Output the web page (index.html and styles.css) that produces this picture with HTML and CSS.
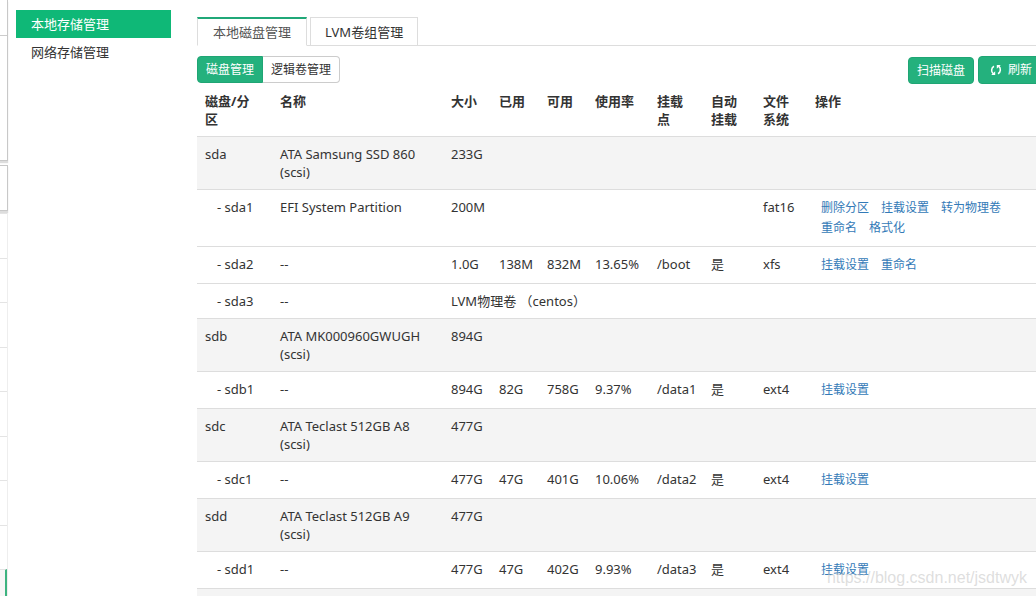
FILE: index.html
```html
<!DOCTYPE html>
<html lang="zh-CN">
<head>
<meta charset="utf-8">
<title>本地存储管理</title>
<link rel="stylesheet" href="styles.css">
</head>
<body>
<div class="page">
  <div class="rail">
    <div class="panel panel-top"><div class="panel-head"></div></div>
    <div class="panel panel-small"></div>
    <ul class="rail-list">
      <li></li><li></li><li></li><li></li><li></li><li></li><li></li><li></li><li class="current"></li>
    </ul>
  </div>
  <nav class="side">
    <a class="side-link active" href="#local">本地存储管理</a>
    <a class="side-link" href="#network">网络存储管理</a>
  </nav>
  <main class="main">
    <div class="tabs">
      <button class="tab active" type="button">本地磁盘管理</button>
      <button class="tab" type="button">LVM卷组管理</button>
    </div>
    <div class="toolbar">
      <div class="group">
        <button class="btn primary" type="button">磁盘管理</button>
        <button class="btn" type="button">逻辑卷管理</button>
      </div>
      <div class="tools">
        <button class="btn primary scan" type="button">扫描磁盘</button>
        <button class="btn primary refresh" type="button">
          <svg class="icon" viewBox="0 0 12 12" aria-hidden="true"><path class="arc" d="M4 2.2C1 3.6 1 8 3.2 9.6M8 9.8C11 8.400 11 4 8.800 2.400"/><path class="tip" d="M1.200 11h4V7.200zM10.800 1h-4v3.800z"/></svg>
          刷新
        </button>
      </div>
    </div>
    <table class="disks">
      <colgroup><col class="c-disk"><col class="c-name"><col class="c-num"><col class="c-num"><col class="c-num"><col class="c-rate"><col class="c-mount"><col class="c-fs"><col class="c-fs"><col></colgroup>
      <thead>
        <tr><th>磁盘/分<br>区</th><th>名称</th><th>大小</th><th>已用</th><th>可用</th><th>使用率</th><th>挂载点</th><th>自动挂载</th><th>文件系统</th><th>操作</th></tr>
      </thead>
      <tbody>
        <tr class="disk"><td>sda</td><td>ATA Samsung SSD 860 (scsi)</td><td>233G</td><td colspan="7"></td></tr>
        <tr><td class="part">- sda1</td><td>EFI System Partition</td><td>200M</td><td></td><td></td><td></td><td></td><td></td><td>fat16</td><td><div class="actions"><a href="#">删除分区</a><a href="#">挂载设置</a><a href="#">转为物理卷</a><a href="#">重命名</a><a href="#">格式化</a></div></td></tr>
        <tr><td class="part">- sda2</td><td>--</td><td>1.0G</td><td>138M</td><td>832M</td><td>13.65%</td><td>/boot</td><td>是</td><td>xfs</td><td><div class="actions"><a href="#">挂载设置</a><a href="#">重命名</a></div></td></tr>
        <tr><td class="part">- sda3</td><td>--</td><td colspan="8">LVM物理卷 （centos）</td></tr>
        <tr class="disk"><td>sdb</td><td>ATA MK000960GWUGH (scsi)</td><td>894G</td><td colspan="7"></td></tr>
        <tr><td class="part">- sdb1</td><td>--</td><td>894G</td><td>82G</td><td>758G</td><td>9.37%</td><td>/data1</td><td>是</td><td>ext4</td><td><div class="actions"><a href="#">挂载设置</a></div></td></tr>
        <tr class="disk"><td>sdc</td><td>ATA Teclast 512GB A8 (scsi)</td><td>477G</td><td colspan="7"></td></tr>
        <tr><td class="part">- sdc1</td><td>--</td><td>477G</td><td>47G</td><td>401G</td><td>10.06%</td><td>/data2</td><td>是</td><td>ext4</td><td><div class="actions"><a href="#">挂载设置</a></div></td></tr>
        <tr class="disk"><td>sdd</td><td>ATA Teclast 512GB A9 (scsi)</td><td>477G</td><td colspan="7"></td></tr>
        <tr><td class="part">- sdd1</td><td>--</td><td>477G</td><td>47G</td><td>402G</td><td>9.93%</td><td>/data3</td><td>是</td><td>ext4</td><td><div class="actions"><a href="#">挂载设置</a></div></td></tr>
        <tr class="disk"><td colspan="10"></td></tr>
      </tbody>
    </table>
  </main>
</div>
<div class="watermark">https://blog.csdn.net/jsdtwyk</div>
</body>
</html>
```

FILE: styles.css
```css
* {
  box-sizing: border-box;
}

body {
  margin: 0;
  height: 100vh;
  overflow: hidden;
  background: #fff;
  color: #333;
  font: 13px/18px "Noto Sans", "Noto Sans CJK SC", sans-serif;
}

button {
  font: inherit;
  color: inherit;
  white-space: nowrap;
}

.page {
  display: flex;
  min-height: 100vh;
}

/* edge of the outer menu */
.rail {
  flex: 0 0 8px;
}

.panel {
  border: 1px solid #c8c8c8;
  border-left: 0;
  box-shadow: 0 2px 1px #ddd;
}

.panel-top {
  height: 161px;
  border-top: 0;
}

.panel-head {
  height: 36px;
  border-bottom: 1px solid #ccc;
}

.panel-small {
  height: 46px;
  margin-top: 4px;
}

.rail-list {
  list-style: none;
  margin: 2px 0 0;
  padding: 0;
  border-right: 1px solid #eee;
}

.rail-list li {
  height: 44px;
  border-top: 1px solid #e4e4e4;
}

.rail-list li:nth-child(odd) {
  height: 45px;
}

.rail-list .current {
  background: #f6f6f6;
  border-right: 2px solid #3cb37f;
}

.side {
  flex: 0 0 155px;
  margin: 10px 26px 0 8px;
}

.side-link {
  display: block;
  padding: 5px 15px;
  color: #333;
  text-decoration: none;
}

.side-link.active {
  background: #0fb877;
  color: #fff;
}

.main {
  flex: 1;
  min-width: 0;
  padding-top: 17px;
}

.tabs {
  display: flex;
  gap: 3px;
  border-bottom: 1px solid #ddd;
}

.tab {
  height: 29px;
  margin-bottom: -1px;
  padding: 0 14px;
  background: #fff;
  border: 1px solid #ddd;
}

.tab.active {
  padding: 0 15px;
  border-top: 2px solid #20a878;
  border-bottom-color: #fff;
  color: #555;
}

.toolbar {
  display: flex;
  justify-content: space-between;
  margin: 10px -11px 0 0;
  height: 28px;
}

.group,
.tools {
  display: flex;
}

.tools {
  gap: 4px;
  align-items: flex-end;
}

.btn {
  height: 27px;
  padding: 0 8px;
  border: 1px solid #ccc;
  border-radius: 4px;
  background: #fff;
  font-size: 12px;
}

.btn.primary {
  background: #24b17d;
  border-color: #20a574;
  color: #fff;
}

.group .btn:first-child {
  border-radius: 4px 0 0 4px;
}

.group .btn:last-child {
  border-left: 0;
  border-radius: 0 4px 4px 0;
}

.refresh {
  display: flex;
  align-items: center;
  gap: 6px;
  height: 28px;
  padding: 0 14px 0 11px;
}

.icon {
  width: 12px;
  height: 12px;
}

.arc {
  fill: none;
  stroke: #fff;
  stroke-width: 1.5;
}

.tip {
  fill: #fff;
}

.disks {
  width: 100%;
  table-layout: fixed;
  border-collapse: separate;
  border-spacing: 0;
}

.c-disk { width: 75px; }
.c-name { width: 171px; }
.c-num { width: 48px; }
.c-rate { width: 62px; }
.c-mount { width: 54px; }
.c-fs { width: 52px; }

th,
td {
  padding: 8px;
  text-align: left;
  vertical-align: top;
}

td {
  border-top: 1px solid #ddd;
}

th {
  font-weight: bold;
}

.disk {
  background: #f4f4f4;
}

.disks .part {
  padding-left: 20px;
}

.actions {
  display: flex;
  flex-wrap: wrap;
  column-gap: 12px;
  padding-left: 6px;
  font-size: 12px;
  line-height: 20px;
}

.actions a {
  color: #337ab7;
  text-decoration: none;
}

.watermark {
  position: absolute;
  right: 9px;
  bottom: 9px;
  color: rgba(200, 200, 200, 0.6);
  font: 16px/18px "Liberation Sans", Arial, sans-serif;
  pointer-events: none;
}
```
